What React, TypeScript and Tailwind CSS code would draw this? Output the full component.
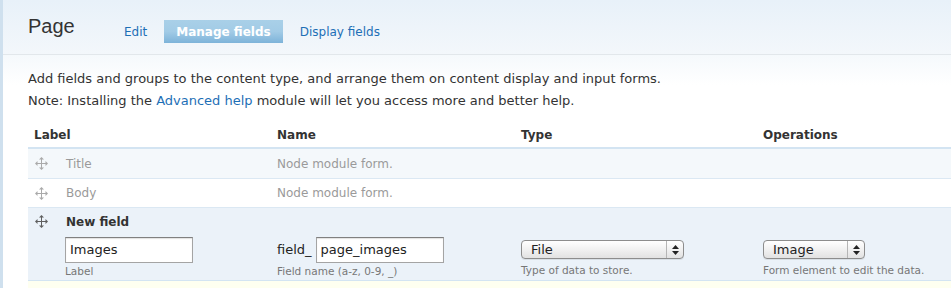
import React from "react";

const font = { fontFamily: '"DejaVu Sans", Verdana, sans-serif' };

const DragHandle = ({ dark }: { dark?: boolean }) => (
  <svg width="13" height="13" viewBox="0 0 13 13" className="shrink-0">
    <g fill={dark ? "#5f5f5f" : "#aaaaaa"}>
      <rect x="6" y="2" width="1" height="9" />
      <rect x="2" y="6" width="9" height="1" />
      <path d="M6.5 0 L9 2.5 L4 2.5 Z" />
      <path d="M6.5 13 L9 10.5 L4 10.5 Z" />
      <path d="M0 6.5 L2.5 4 L2.5 9 Z" />
      <path d="M13 6.5 L10.5 4 L10.5 9 Z" />
    </g>
  </svg>
);

const MacSelect = ({ value, width }: { value: string; width: string }) => (
  <div
    className={`${width} h-[19px] flex items-center rounded-[4px] border border-[#8d8d8d] bg-gradient-to-b from-[#ffffff] via-[#f1f1f1] to-[#e2e2e2] shadow-[0_1px_0_rgba(0,0,0,0.08)]`}
  >
    <span className="flex-1 pl-[9px] text-[13px] leading-none text-[#222]">{value}</span>
    <span className="w-[17px] h-full border-l border-[#b5b5b5] flex flex-col items-center justify-center gap-[2px]">
      <svg width="7" height="4" viewBox="0 0 7 4"><path d="M3.5 0 L7 4 L0 4 Z" fill="#222" /></svg>
      <svg width="7" height="4" viewBox="0 0 7 4"><path d="M0 0 L7 0 L3.5 4 Z" fill="#222" /></svg>
    </span>
  </div>
);

const TextBox = ({ value }: { value: string }) => (
  <div className="w-[128px] h-[26px] border border-[#a4a4a4] border-t-[#808080] bg-white shadow-[inset_0_1px_1px_rgba(0,0,0,0.12)] flex items-center pl-[4px] text-[13px] text-[#222]">
    {value}
  </div>
);

export default function App() {
  return (
    <div
      className="w-[951px] h-[288px] overflow-hidden bg-white border-l-[3px] border-[#cfe0ee] flex flex-col"
      style={font}
    >
      <div className="h-[55px] shrink-0 bg-gradient-to-b from-[#e8f1f9] to-[#f3f7fb] border-b border-[#e2e7eb] flex items-start pl-[25px]">
        <h1
          className="text-[20px] text-[#333] mt-[11px] w-[93px]"
          style={{ fontFamily: '"Liberation Sans", Arial, sans-serif' }}
        >
          Page
        </h1>
        <nav className="flex items-center mt-[20px] text-[12px] h-[23px]">
          <a className="text-[#1d6fb6] px-[3px]">Edit</a>
          <span className="ml-[14px] h-[23px] px-[12px] flex items-center font-bold text-white bg-gradient-to-b from-[#a9d0e8] via-[#a2cbe6] to-[#7db3d9]">
            Manage fields
          </span>
          <a className="text-[#1d6fb6] ml-[17px]">Display fields</a>
        </nav>
      </div>

      <div className="bg-gradient-to-b from-[#f5f9fc] to-white h-[30px] -mb-[30px] shrink-0" />

      <div className="pl-[25px] pt-[13px] text-[13px] leading-[22px] text-[#333]">
        <p>Add fields and groups to the content type, and arrange them on content display and input forms.</p>
        <p>
          Note: Installing the <a className="text-[#1d6fb6]">Advanced help</a> module will let you access more and better help.
        </p>
      </div>

      <div className="ml-[25px] mt-[11px] text-[12px]">
        <div className="grid grid-cols-[249px_244px_242px_1fr] h-[26px] items-center border-b-2 border-[#d3e4f2] font-bold text-[#333]">
          <div className="pl-[6px]">Label</div>
          <div>Name</div>
          <div>Type</div>
          <div>Operations</div>
        </div>

        <div className="grid grid-cols-[249px_244px_242px_1fr] h-[30px] items-center bg-[#f4f8fb] border-b border-[#dbe8f3] text-[#9a9a9a]">
          <div className="flex items-center pl-[7px] gap-[18px]">
            <DragHandle />
            <span>Title</span>
          </div>
          <div>Node module form.</div>
          <div />
          <div />
        </div>

        <div className="grid grid-cols-[249px_244px_242px_1fr] h-[29px] items-center bg-white border-b border-[#dbe8f3] text-[#9a9a9a]">
          <div className="flex items-center pl-[7px] gap-[18px]">
            <DragHandle />
            <span>Body</span>
          </div>
          <div>Node module form.</div>
          <div />
          <div />
        </div>

        <div className="bg-[#ebf2f9] border-b border-[#d3e4f2] h-[73px] pt-[6px]">
          <div className="flex items-center pl-[7px] gap-[18px] h-[15px] font-bold text-[#333]">
            <DragHandle dark />
            <span>New field</span>
          </div>
          <div className="grid grid-cols-[249px_244px_242px_1fr] mt-[8px] items-start">
            <div className="pl-[37px]">
              <TextBox value="Images" />
              <div className="text-[10.5px] text-[#777] mt-[1px] leading-[14px]">Label</div>
            </div>
            <div>
              <div className="flex items-center gap-[4px]">
                <span className="text-[#222] text-[13px]">field_</span>
                <TextBox value="page_images" />
              </div>
              <div className="text-[10.5px] text-[#777] mt-[1px] leading-[14px]">Field name (a-z, 0-9, _)</div>
            </div>
            <div className="pt-[3px]">
              <MacSelect value="File" width="w-[163px]" />
              <div className="text-[10.5px] text-[#777] mt-[4px] leading-[14px]">Type of data to store.</div>
            </div>
            <div className="pt-[3px]">
              <MacSelect value="Image" width="w-[102px]" />
              <div className="text-[10.5px] text-[#777] mt-[4px] leading-[14px]">Form element to edit the data.</div>
            </div>
          </div>
        </div>

        <div className="bg-[#fefff0] h-[20px]" />
      </div>
    </div>
  );
}
